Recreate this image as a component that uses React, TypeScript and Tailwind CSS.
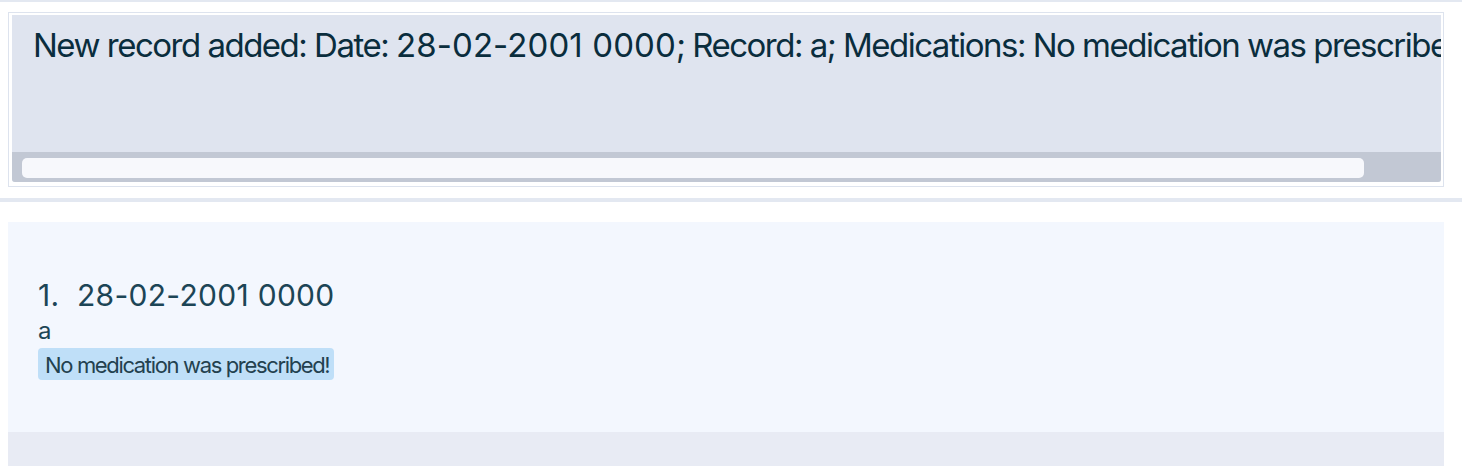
import React from "react";

export default function App() {
  return (
    <div className="w-[1462px] h-[466px] bg-white overflow-hidden font-['Inter','Liberation_Sans',sans-serif] flex flex-col">
      <div className="h-[2px] bg-[#e3e8f1] shrink-0" />
      <div className="pl-[8px] pt-[10px] shrink-0">
        <div className="w-[1436px] border border-[#dde3ee] pt-[2px] pl-[3px] pr-[2px] pb-[4px]">
          <div className="h-[167px] bg-[#dfe4ef] rounded-b-[3px] flex flex-col overflow-hidden">
            <div className="flex-1 overflow-hidden pl-[21px] pt-[10px]">
              <div className="whitespace-nowrap text-[33px] leading-[40px] tracking-[-1.5px] text-[#0a2d3d]">
                New record added: Date: <span className="tracking-[0.1px]">28-02-2001 0000</span>; Record: a; Medications: No medication was prescribed!
              </div>
            </div>
            <div className="h-[30px] bg-[#c2c8d4] pl-[10px] pt-[6px] shrink-0">
              <div className="w-[1342px] h-[20px] rounded-[5px] bg-[#f7f8fc]" />
            </div>
          </div>
        </div>
      </div>
      <div className="h-[4px] bg-[#e3e8f1] mt-[11px] shrink-0" />
      <div className="pl-[8px] pt-[20px] flex-1 flex flex-col">
        <div className="w-[1436px] flex-1 flex flex-col bg-[#e8ebf4]">
          <div className="h-[210px] bg-[#f3f7fe] pl-[30px] pt-[55px] flex flex-col items-start">
            <div className="text-[30px] leading-[36px] tracking-[0.3px] text-[#1c4556] whitespace-nowrap">
              1.&nbsp;&nbsp;28-02-2001 0000
            </div>
            <div className="mt-[4px] text-[24px] leading-[28px] tracking-[-0.05em] text-[#1c4556]">a</div>
            <div className="mt-[3px] h-[32px] pl-[7px] pr-[5px] pt-[3px] rounded-[4px] bg-[#bfdff8] text-[22px] leading-[29px] tracking-[-1.35px] text-[#23414f] whitespace-nowrap">
              No medication was prescribed!
            </div>
          </div>
        </div>
      </div>
    </div>
  );
}
